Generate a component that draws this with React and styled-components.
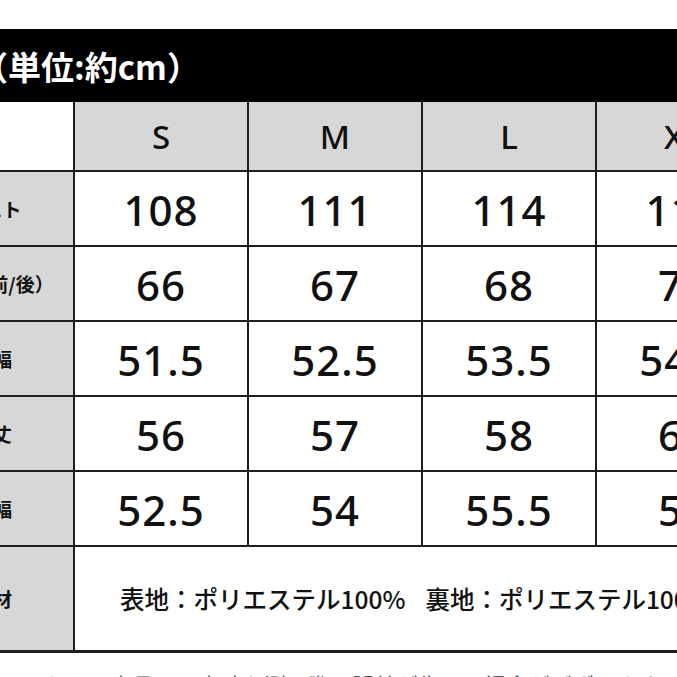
import React from "react";
import styled, { createGlobalStyle } from "styled-components";

const Global = createGlobalStyle`
  html, body { margin: 0; padding: 0; background: #ffffff; overflow: hidden; }
  body { font-family: "Noto Sans", "Noto Sans CJK JP", sans-serif; }
`;

const Page = styled.div`
  width: 677px;
  height: 677px;
  overflow: hidden;
  padding-top: 29px;
  box-sizing: border-box;
`;

const Sheet = styled.div`
  margin-left: -87px;
  width: 1100px;
  display: flex;
  flex-direction: column;
`;

const TitleBar = styled.div`
  height: 73px;
  background: #000;
  color: #fff;
  display: flex;
  align-items: center;
  padding-left: 62px;
  font-family: "Noto Sans CJK JP", sans-serif;
  font-weight: 700;
  font-size: 33px;
`;

const Grid = styled.div`
  display: grid;
  grid-template-columns: 160px repeat(5, 172px);
  grid-template-rows: 68px repeat(5, 73px) 103px;
  column-gap: 2px;
  row-gap: 2px;
  background: #1e1e1e;
  border-bottom: 3px solid #1e1e1e;
  width: max-content;
`;

const Cell = styled.div`
  background: ${(p) => (p.$tone === "gray" ? "#d7d7d7" : "#ffffff")};
  display: flex;
  align-items: center;
  justify-content: center;
  color: #111;
`;

const SizeHead = styled(Cell)`
  font-family: "Noto Sans", sans-serif;
  font-size: 33px;
  font-weight: 500;
`;

const Label = styled(Cell)`
  font-family: "Noto Sans CJK JP", sans-serif;
  font-size: 19px;
  font-weight: 700;
  white-space: nowrap;
`;

const Value = styled(Cell)`
  font-family: "Noto Sans", sans-serif;
  font-size: 42px;
  font-weight: 500;
  letter-spacing: 1px;
  padding-top: 2px;
`;

const Material = styled(Cell)`
  grid-column: 2 / span 5;
  justify-content: flex-start;
  padding-left: 45px;
  font-family: "Noto Sans CJK JP", sans-serif;
  font-size: 24.5px;
  font-weight: 500;
  white-space: nowrap;
`;

const Gap = styled.span`
  display: inline-block;
  width: 20px;
`;

const Note = styled.div`
  margin-top: 15px;
  padding-left: 87px;
  font-family: "Noto Sans CJK JP", sans-serif;
  font-size: 22px;
  color: #555;
  white-space: nowrap;
`;

const sizes = ["S", "M", "L", "XL", "XXL"];
const rows = [
  { label: "バスト", values: ["108", "111", "114", "117", "120"] },
  { label: "着丈（前/後）", values: ["66", "67", "68", "70", "71"] },
  { label: "肩幅", values: ["51.5", "52.5", "53.5", "54.5", "55.5"] },
  { label: "袖丈", values: ["56", "57", "58", "60", "61"] },
  { label: "裾幅", values: ["52.5", "54", "55.5", "57", "58.5"] },
];

export default function App() {
  return (
    <>
      <Global />
      <Page>
        <Sheet>
          <TitleBar>（単位:約cm）</TitleBar>
          <Grid>
            <Cell />
            {sizes.map((s) => (
              <SizeHead key={s} $tone="gray">{s}</SizeHead>
            ))}
            {rows.map((r) => (
              <React.Fragment key={r.label}>
                <Label $tone="gray">{r.label}</Label>
                {r.values.map((v, i) => (
                  <Value key={i}>{v}</Value>
                ))}
              </React.Fragment>
            ))}
            <Label $tone="gray">素材</Label>
            <Material>
              表地：ポリエステル100%<Gap />裏地：ポリエステル100%
            </Material>
          </Grid>
          <Note>※こちらの商品は、実寸を測る際に誤差が生じる場合がございます。</Note>
        </Sheet>
      </Page>
    </>
  );
}
